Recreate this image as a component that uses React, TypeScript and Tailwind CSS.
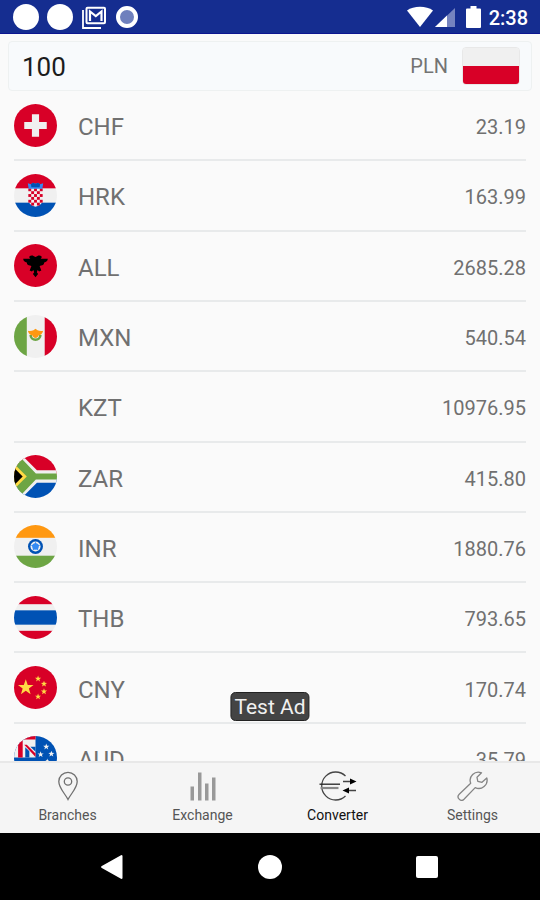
import React, { useState } from 'react';

interface Rate {
    code: string;
    value: string;
}

const rates: Rate[] = [
    { code: 'CHF', value: '23.19' },
    { code: 'HRK', value: '163.99' },
    { code: 'ALL', value: '2685.28' },
    { code: 'MXN', value: '540.54' },
    { code: 'KZT', value: '10976.95' },
    { code: 'ZAR', value: '415.80' },
    { code: 'INR', value: '1880.76' },
    { code: 'THB', value: '793.65' },
    { code: 'CNY', value: '170.74' },
    { code: 'AUD', value: '35.79' },
];

const STAR = '0,-10 2.4,-3.2 9.5,-3.1 3.8,1.2 5.9,8.1 0,4 -5.9,8.1 -3.8,1.2 -9.5,-3.1 -2.4,-3.2';

const Star: React.FC<{ x: number; y: number; r: number; fill: string }> = ({ x, y, r, fill }) => (
    <polygon points={STAR} fill={fill} transform={`translate(${x} ${y}) scale(${r / 10})`} />
);

// Flag artwork, drawn on a 42x42 canvas and clipped to a circle
const flags: Record<string, React.ReactNode> = {
    CHF: (
        <>
            <rect width="42" height="42" fill="#d80027" />
            <path d="M17.500 10h7v7.500H32v7h-7.500V32h-7v-7.500H10v-7h7.500z" fill="#f0f0f0" />
        </>
    ),
    HRK: (
        <>
            <rect width="42" height="42" fill="#f0f0f0" />
            <rect width="42" height="14" fill="#d80027" />
            <rect y="28" width="42" height="14" fill="#0052b4" />
            <path d="M14 14h14v11c0 4-3 6-7 7-4-1-7-3-7-7z" fill="#f0f0f0" />
            {[0, 1, 2, 3, 4, 5].map((row) =>
                [0, 1, 2, 3, 4].map((col) =>
                    (row + col) % 2 === 0 && !(row === 5 && (col === 0 || col === 4)) ? (
                        <rect
                            key={`${row}-${col}`}
                            x={14 + col * 2.8}
                            y={14 + row * 2.8}
                            width="2.8"
                            height="2.8"
                            fill="#d80027"
                        />
                    ) : null
                )
            )}
            <path d="M13.500 9l3 1 2-1.500 2.500 1 2.500-1 2 1.500 3-1-.8 5.500H14.300z" fill="#338af3" />
            <path d="M16.500 10l2-1.500 2.500 1 2.500-1 2 1.500-.5 3h-8z" fill="#0052b4" />
        </>
    ),
    ALL: (
        <>
            <rect width="42" height="42" fill="#d80027" />
            <path
                d="M33 14.500h-7c.8-.5 1.200-1.300 1-2.200-1-1.100-2.900-1.400-4-.6L21 12.800l-2-1.100c-1.100-.8-3-.5-4 .6-.2.900.2 1.700 1 2.200H9c0 2 1.600 3.500 3.500 3.500 0 1.800 1.400 3 3 3l1.500.4-1.700 4.600 2.200.9 1.400-1.600.8 2.200-1.200 1.900 2.500 3.100 2.500-3.100-1.200-1.900.8-2.200 1.400 1.600 2.200-.9L25 21.400l1.500-.4c1.600 0 3-1.200 3-3 1.900 0 3.500-1.500 3.500-3.500z"
                fill="#000"
            />
        </>
    ),
    MXN: (
        <>
            <rect width="42" height="42" fill="#f0f0f0" />
            <rect width="12.500" height="42" fill="#6da544" />
            <rect x="30" width="12" height="42" fill="#d80027" />
            <path d="M15 19.500a6 6 0 0 0 12 0h-2.500a3.500 3.500 0 0 1-7 0z" fill="#6da544" />
            <path d="M13.500 15.500c2 .5 4 .2 5.500-.5l2-1.500 2 1.500c1.500.7 3.500 1 5.500.5-.8 3.200-2.500 4.300-4.500 4.600-.4 1.600-1.500 2.400-3 2.400s-2.600-.8-3-2.400c-2-.3-3.700-1.400-4.500-4.600z" fill="#ff9811" />
        </>
    ),
    ZAR: (
        <>
            <rect width="42" height="21" fill="#d80027" />
            <rect y="21" width="42" height="21" fill="#0052b4" />
            <path d="M-3-2L20 21-3 44M17 21h26" stroke="#f0f0f0" strokeWidth="12" fill="none" />
            <path d="M-10-10L17.500 21-10 52z" fill="#6da544" />
            <path d="M-2-2L20 21-2 44M18 21h26" stroke="#6da544" strokeWidth="6" fill="none" />
            <path d="M-2 6.500L12.500 21-2 35.500z" fill="#ffda44" />
            <path d="M-2 10.500L8.500 21-2 31.500z" fill="#000" />
        </>
    ),
    INR: (
        <>
            <rect width="42" height="42" fill="#f0f0f0" />
            <rect width="42" height="12.500" fill="#ff9811" />
            <rect y="30" width="42" height="12" fill="#6da544" />
            <circle cx="21" cy="21" r="7.300" fill="#0052b4" />
            <circle cx="21" cy="21" r="4.900" fill="#f0f0f0" />
            <Star x={21} y={21} r={5} fill="#338af3" />
            <circle cx="21" cy="21" r="3.200" fill="#338af3" />
        </>
    ),
    THB: (
        <>
            <rect width="42" height="42" fill="#f0f0f0" />
            <rect width="42" height="8" fill="#d80027" />
            <rect y="14" width="42" height="14" fill="#0052b4" />
            <rect y="34" width="42" height="8" fill="#d80027" />
        </>
    ),
    CNY: (
        <>
            <rect width="42" height="42" fill="#d80027" />
            <Star x={11.5} y={21} r={8} fill="#ffda44" />
            <Star x={23.5} y={12.5} r={3.2} fill="#ffda44" />
            <Star x={29.3} y={17.5} r={3.2} fill="#ffda44" />
            <Star x={29.3} y={25} r={3.2} fill="#ffda44" />
            <Star x={23.5} y={30} r={3.2} fill="#ffda44" />
        </>
    ),
    AUD: (
        <>
            <rect width="42" height="42" fill="#0052b4" />
            <rect width="21" height="21" fill="#f0f0f0" />
            <path d="M21 3.500H8.500V21H4V4L8 0h13z" fill="#d80027" />
            <path d="M11 11v10h4v-6z" fill="#0052b4" />
            <path d="M16 10.500h5v5z" fill="#0052b4" />
            <path d="M10 8.500h2.500L21 17v3.500z" fill="#d80027" />
            <Star x={31.5} y={10.5} r={3.2} fill="#f0f0f0" />
            <Star x={26} y={18} r={3.2} fill="#f0f0f0" />
            <Star x={36.5} y={17.5} r={3.2} fill="#f0f0f0" />
            <Star x={32.5} y={24} r={2} fill="#f0f0f0" />
            <Star x={32} y={33} r={2.8} fill="#f0f0f0" />
            <Star x={13} y={30} r={5} fill="#f0f0f0" />
        </>
    ),
};

const StatusBar: React.FC = () => (
    <header className="flex h-[34px] shrink-0 items-center justify-between border-b border-[#0c1590] bg-[#152d90] pl-[13px] pr-3 text-white">
        <div className="flex items-center gap-2">
            <span className="size-[26px] rounded-full bg-white" />
            <span className="size-[26px] rounded-full bg-white" />
            <svg className="size-[26px]" viewBox="0 0 26 26" fill="none" stroke="#fff">
                <path d="M2 6v18h18" strokeWidth="1.800" />
                <rect x="5.500" y="3.800" width="18.500" height="15.500" rx="1" strokeWidth="2" />
                <path d="M9 17V7.500l5.800 4.500 5.700-4.500V17" strokeWidth="2.200" />
            </svg>
            <span className="ml-px size-[22px] rounded-full border-4 border-white bg-[#6f80bd]" />
        </div>
        <div className="flex items-center">
            <svg className="h-[22px] w-[26px]" viewBox="0 0 26 22" fill="#fff">
                <path d="M0 4.500C3.500 2 8 .8 13 .8S22.500 2 26 4.500L13 21z" />
            </svg>
            <svg className="ml-[2px] h-[22px] w-5" viewBox="0 0 20 22">
                <path d="M20 2v19H0z" fill="#7583bf" />
                <path d="M12 9.600V21H0z" fill="#fff" />
            </svg>
            <svg className="ml-[11px] h-[22px] w-[15px]" viewBox="0 0 15 22" fill="#fff">
                <path d="M4.500 0h6v2.500H14a1 1 0 0 1 1 1V21a1 1 0 0 1-1 1H1a1 1 0 0 1-1-1V3.500a1 1 0 0 1 1-1h3.500z" />
            </svg>
            <time className="ml-2 pt-[2px] text-xl leading-6 font-medium">2:38</time>
        </div>
    </header>
);

const PolishFlag: React.FC = () => (
    <span className="flex h-[38px] w-[58px] flex-col overflow-hidden rounded-[4px] border border-[#e8e8e8]">
        <span className="flex-1 bg-[#f0f0f0]" />
        <span className="flex-1 bg-[#d80027]" />
    </span>
);

const AmountBox: React.FC = () => {
    const [amount, setAmount] = useState('100');

    return (
        <div className="shrink-0 px-2 pt-[7px]">
            <div className="flex h-[50px] items-center rounded-[4px] border border-[#eef1f1] bg-[#f8fafc] pr-[11px] pl-[13px]">
                <input
                    aria-label="Amount"
                    className="min-w-0 flex-1 bg-transparent pt-[2px] text-[26px] leading-8 text-[#1c1c1c] outline-none"
                    value={amount}
                    onChange={(e) => setAmount(e.target.value)}
                />
                <button type="button" className="flex items-center gap-[14px] text-xl text-[#737373]">
                    PLN
                    <PolishFlag />
                </button>
            </div>
        </div>
    );
};

const RateRow: React.FC<{ rate: Rate }> = ({ rate }) => (
    <li className="flex items-center border-b-2 border-[#e8eaeb] text-[#707070]">
        <span className="size-[43px] overflow-hidden rounded-full">
            {flags[rate.code] && (
                <svg className="size-full" viewBox="0 0 42 42">
                    {flags[rate.code]}
                </svg>
            )}
        </span>
        <span className="ml-[21px] pt-1 text-2xl">{rate.code}</span>
        <span className="ml-auto pt-1 text-xl">{rate.value}</span>
    </li>
);

const PinIcon = () => (
    <svg className="h-[30px] w-10" viewBox="0 0 40 30" fill="none" stroke="#707070" strokeWidth="1.300">
        <path d="M20 28.500C17 22.500 10.800 17 10.800 10.500a9.200 9.200 0 0 1 18.400 0C29.200 17 23 22.500 20 28.500z" />
        <circle cx="20" cy="10.500" r="3.700" />
    </svg>
);

const BarsIcon = () => (
    <svg className="h-[30px] w-10" viewBox="0 0 40 30" fill="#999">
        <rect x="7.500" y="15.500" width="3.500" height="14" />
        <rect x="15" y="1.500" width="3.500" height="28" />
        <rect x="22" y="12.500" width="3.500" height="17" />
        <rect x="29" y="6.500" width="3.500" height="23" />
    </svg>
);

const ConverterIcon = () => (
    <svg className="h-[30px] w-10" viewBox="0 0 40 30" fill="none" stroke="#444" strokeWidth="1.300">
        <path d="M27.500 5A14 14 0 1 0 27.500 25" />
        <path d="M1.500 13.200h20.500" stroke="#222" />
        <path d="M2.500 17h18" stroke="#888" strokeWidth="2.200" />
        <path d="M25 10.500h10M29 19.500h9" />
        <path d="M32 7.500l6.500 3L32 13.500zM31 16.500l-6.500 3L31 22.500z" fill="#000" stroke="none" />
    </svg>
);

const WrenchIcon = () => (
    <svg className="h-[30px] w-10" viewBox="0 0 40 30" fill="none" stroke="#858585" strokeWidth="1.300" strokeLinejoin="round">
        <path d="M28.500 1.800a8.200 8.200 0 0 0-10.800 10.500L6.200 23.300a3.400 3.400 0 0 0 4.800 4.900L22.200 16.600A8.300 8.300 0 0 0 33.800 7L29 11.300l-4.200-1L24 6.300z" />
    </svg>
);

const tabs = [
    { label: 'Branches', icon: PinIcon },
    { label: 'Exchange', icon: BarsIcon },
    { label: 'Converter', icon: ConverterIcon, active: true },
    { label: 'Settings', icon: WrenchIcon },
];

const TabBar: React.FC = () => (
    <nav className="grid h-[72px] shrink-0 grid-cols-4 border-t-2 border-[#e8e8e8] bg-[#f5f5f5]">
        {tabs.map(({ label, icon: Icon, active }) => (
            <button
                key={label}
                type="button"
                aria-current={active ? 'page' : undefined}
                className={`flex flex-col items-center gap-1 pt-2 text-sm leading-5 ${active ? 'text-[#111]' : 'text-[#555]'}`}
            >
                <Icon />
                {label}
            </button>
        ))}
    </nav>
);

const SystemBar: React.FC = () => (
    <div className="grid h-[67px] shrink-0 grid-cols-3 items-center bg-black px-[34px]">
        <button type="button" aria-label="Back" className="justify-self-center">
            <svg className="size-6" viewBox="0 0 24 24" fill="#fff">
                <path d="M20 .2a1 1 0 0 1 1.500.9v21.800a1 1 0 0 1-1.500.9L.8 13a1.200 1.200 0 0 1 0-2z" />
            </svg>
        </button>
        <button type="button" aria-label="Home" className="size-6 justify-self-center rounded-full bg-white" />
        <button type="button" aria-label="Recent apps" className="size-[22px] justify-self-center rounded-[2px] bg-white" />
    </div>
);

const App: React.FC = () => {
    return (
        <div className="flex h-screen flex-col bg-[#fafafa] font-[Roboto,sans-serif]">
            <StatusBar />
            <AmountBox />
            <main className="relative min-h-0 flex-1">
                <div className="h-full overflow-y-auto px-[14px] [scrollbar-width:none]">
                    <ul className="grid min-h-[703px] auto-rows-fr">
                        {rates.map((rate) => (
                            <RateRow key={rate.code} rate={rate} />
                        ))}
                    </ul>
                </div>
                <span className="absolute bottom-10 left-1/2 -translate-x-1/2 rounded-[5px] border border-[#222] bg-[#444] px-[3px] pt-px text-[21px] leading-[26px] whitespace-nowrap text-[#f0f0f0]">
                    Test Ad
                </span>
            </main>
            <TabBar />
            <SystemBar />
        </div>
    );
};

export default App;
